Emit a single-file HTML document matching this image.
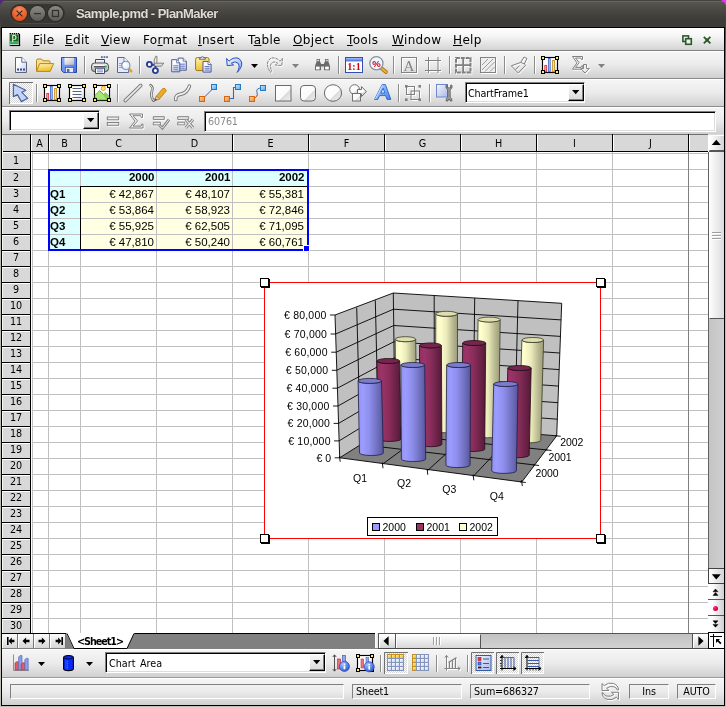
<!DOCTYPE html><html><head><meta charset="utf-8"><title>Sample.pmd - PlanMaker</title><style>
html,body{margin:0;padding:0}
body{width:726px;height:707px;overflow:hidden;position:relative;background:#3c3b37;font-family:"DejaVu Sans","Liberation Sans",sans-serif;font-size:12px;color:#000}
.a{position:absolute}
.bar{position:absolute;left:2px;width:722px}
.hd{position:absolute;background:#d8d8d8;font-family:"DejaVu Sans Condensed","DejaVu Sans",sans-serif;text-align:center;line-height:16px}
.ui{font-family:"DejaVu Sans Condensed","DejaVu Sans",sans-serif;font-size:10.7px;letter-spacing:-0.15px;white-space:nowrap}
.cell{position:absolute;font-family:"Liberation Sans",sans-serif;font-size:11.5px;line-height:16px;white-space:nowrap}
.sep{position:absolute;width:1px;background:#8a8a8a;box-shadow:1px 0 0 #fff}
.sunk{position:absolute;background:#fff;border:1px solid;border-color:#6e6e6e #fff #fff #6e6e6e;box-sizing:border-box}
svg{position:absolute;overflow:visible}
</style></head><body><div id="root" style="position:absolute;left:0;top:0;width:726px;height:707px;overflow:hidden;will-change:transform">
<div class="a" style="left:0;top:0;width:726px;height:28px;background:linear-gradient(#454440 0,#454440 1px,#66655f 1px,#66655f 2px,#57564f 2px,#4b4a45 9px,#3e3d39 18px,#3c3b37 27px);"></div>
<svg style="left:0;top:0" width="726" height="6" viewBox="0 0 726 6"><path d="M0 0H5.2Q1.6 1.4 0 5.2z" fill="#50287e"/><path d="M726 0H720.8Q724.4 1.4 726 5.2z" fill="#ee30f8"/></svg>
<div class="a" style="left:0;top:20px;width:726px;height:687px;background:linear-gradient(#3e3d39 0,#4a4843 8px,#807d77 45px,#a8a59e 90px,#c0bdb6 150px,#c2bfb8 100%)"></div>
<div class="a" style="left:1px;top:20px;width:724px;height:7px;background:#3c3b37"></div>
<div class="a" style="left:1px;top:27px;width:724px;height:679px;background:#000"></div>
<div class="a" style="left:10px;top:4px;width:55px;height:19px;border-radius:10px;background:#373632;box-shadow:0 1px 0 #4a4944"></div>
<div class="a" style="left:12px;top:6px;width:15px;height:15px;border-radius:8px;background:radial-gradient(circle at 50% 25%,#f68c5e,#e65a26 65%,#c8461a);box-shadow:0 0 0 1px #3a2a22"></div>
<div class="a" style="left:30px;top:6px;width:15px;height:15px;border-radius:8px;background:linear-gradient(#8b8a84,#5c5b55);box-shadow:0 0 0 1px #2c2b28"></div>
<div class="a" style="left:48px;top:6px;width:15px;height:15px;border-radius:8px;background:linear-gradient(#8b8a84,#5c5b55);box-shadow:0 0 0 1px #2c2b28"></div>
<svg style="left:12px;top:6px" width="51" height="15"><path d="M4.6 4.6l5.8 5.8M10.4 4.6l-5.8 5.8" stroke="#3c2014" stroke-width="1.1" fill="none"/><path d="M22 7.6h7" stroke="#33322e" stroke-width="1.3"/><rect x="40.5" y="4.5" width="6" height="6" fill="none" stroke="#33322e" stroke-width="1.3"/></svg>
<div class="a" style="left:76px;top:5px;font:bold 13px/17px 'Liberation Sans',sans-serif;color:#dfdbd2;white-space:nowrap;letter-spacing:-0.55px;text-shadow:0 -1px 0 rgba(20,20,30,0.55)" id="title">Sample.pmd - PlanMaker</div>
<div class="bar" style="top:28px;height:22px;background:linear-gradient(#fff,#f4f4f4 40%,#d4d4d4)"></div>
<div class="bar" style="top:50px;height:1px;background:#7f7f7f"></div>
<div class="a mi" style="left:33px;top:33px;font-size:12px;line-height:15px;white-space:nowrap;letter-spacing:0.35px"><u>F</u>ile</div>
<div class="a mi" style="left:65px;top:33px;font-size:12px;line-height:15px;white-space:nowrap;letter-spacing:0.35px"><u>E</u>dit</div>
<div class="a mi" style="left:101px;top:33px;font-size:12px;line-height:15px;white-space:nowrap;letter-spacing:0.35px"><u>V</u>iew</div>
<div class="a mi" style="left:143px;top:33px;font-size:12px;line-height:15px;white-space:nowrap;letter-spacing:0.35px">Fo<u>r</u>mat</div>
<div class="a mi" style="left:198px;top:33px;font-size:12px;line-height:15px;white-space:nowrap;letter-spacing:0.35px"><u>I</u>nsert</div>
<div class="a mi" style="left:248px;top:33px;font-size:12px;line-height:15px;white-space:nowrap;letter-spacing:0.35px">T<u>a</u>ble</div>
<div class="a mi" style="left:293px;top:33px;font-size:12px;line-height:15px;white-space:nowrap;letter-spacing:0.35px"><u>O</u>bject</div>
<div class="a mi" style="left:347px;top:33px;font-size:12px;line-height:15px;white-space:nowrap;letter-spacing:0.35px"><u>T</u>ools</div>
<div class="a mi" style="left:392px;top:33px;font-size:12px;line-height:15px;white-space:nowrap;letter-spacing:0.35px"><u>W</u>indow</div>
<div class="a mi" style="left:453px;top:33px;font-size:12px;line-height:15px;white-space:nowrap;letter-spacing:0.35px"><u>H</u>elp</div>
<svg style="left:0;top:0" width="40" height="52" viewBox="0 0 40 52"><rect x="9.4" y="33.4" width="9.8" height="12" fill="#f4f4f4" stroke="#8a8a8a" stroke-width="0.7"/><rect x="10" y="34.4" width="8.6" height="7.3" fill="#1f6b22"/><rect x="10" y="41.4" width="8.6" height="0.7" fill="#7a8a7a"/><rect x="10" y="42.1" width="8.6" height="2.2" fill="#2aa85e"/><rect x="18.9" y="34" width="1.2" height="12" fill="#000"/><rect x="10.2" y="45" width="9.9" height="1.1" fill="#000"/><path d="M10 33.6H19" stroke="#000" stroke-width="1.3" stroke-dasharray="1 1"/><text x="11.6" y="42.3" font-family="DejaVu Sans,sans-serif" font-size="8.6" fill="#fff">P</text></svg>
<svg style="left:682px;top:35px" width="30" height="11"><rect x="0.9" y="0.9" width="5.6" height="5.6" fill="none" stroke="#2a5a2a" stroke-width="1.6"/><rect x="3.7" y="3.7" width="5.6" height="5.6" fill="#eee" stroke="#2a5a2a" stroke-width="1.6"/><path d="M21.8 1.8l6.6 6.6M28.4 1.8l-6.6 6.6" stroke="#2a5a2a" stroke-width="1.8"/><rect x="23.6" y="3.6" width="3" height="3" fill="#2a5a2a"/></svg>
<div class="bar" style="top:51px;height:27px;background:linear-gradient(#fff 0,#fff 1px,#f5f5f5 1px,#ebebeb 50%,#d0d0d0)"></div>
<div class="bar" style="top:78px;height:1px;background:#8c8c8c"></div>
<div class="bar" style="top:79px;height:27px;background:linear-gradient(#fff 0,#fff 1px,#f5f5f5 1px,#ebebeb 50%,#d0d0d0)"></div>
<div class="bar" style="top:106px;height:1px;background:#8c8c8c"></div>
<div class="bar" style="top:107px;height:27px;background:linear-gradient(#fff 0,#fff 1px,#f5f5f5 1px,#ebebeb 50%,#d0d0d0)"></div>
<svg style="left:0;top:0" width="726" height="707" viewBox="0 0 726 707"><defs>
<linearGradient id="fr" x1="0" y1="0" x2="1" y2="1"><stop offset="0" stop-color="#fff"/><stop offset="0.5" stop-color="#fff"/><stop offset="1" stop-color="#d0d8f4"/></linearGradient>
<linearGradient id="pg" x1="0" y1="0" x2="1" y2="1"><stop offset="0" stop-color="#fff"/><stop offset="0.35" stop-color="#fcfcff"/><stop offset="1" stop-color="#c0ccf0"/></linearGradient>
<linearGradient id="fo" x1="0" y1="0" x2="0.3" y2="1"><stop offset="0" stop-color="#fff4c0"/><stop offset="0.6" stop-color="#f8d460"/><stop offset="1" stop-color="#f0c030"/></linearGradient>
<linearGradient id="fl" x1="0" y1="0" x2="1" y2="1"><stop offset="0" stop-color="#90b0ff"/><stop offset="1" stop-color="#4470e0"/></linearGradient>
<linearGradient id="gr" x1="0" y1="0" x2="1" y2="1"><stop offset="0" stop-color="#fff"/><stop offset="1" stop-color="#b8b8b8"/></linearGradient>
<linearGradient id="gr2" x1="0" y1="0" x2="0" y2="1"><stop offset="0" stop-color="#f4f4f4"/><stop offset="1" stop-color="#a8a8a8"/></linearGradient>
<linearGradient id="ub" x1="0" y1="0" x2="1" y2="1"><stop offset="0" stop-color="#f4f8ff"/><stop offset="1" stop-color="#88aaf0"/></linearGradient>
<linearGradient id="tb" x1="0" y1="0" x2="0" y2="1"><stop offset="0" stop-color="#a8c0ff"/><stop offset="1" stop-color="#4068d8"/></linearGradient>
<linearGradient id="sh" x1="0" y1="0" x2="1" y2="1"><stop offset="0" stop-color="#fff"/><stop offset="0.6" stop-color="#fafafa"/><stop offset="0.61" stop-color="#dcdcdc"/><stop offset="1" stop-color="#f0f0f0"/></linearGradient>
<linearGradient id="ta" x1="0" y1="0" x2="1" y2="1"><stop offset="0" stop-color="#b8dcff"/><stop offset="1" stop-color="#4080e8"/></linearGradient>
<linearGradient id="osq" x1="0" y1="0" x2="1" y2="1"><stop offset="0" stop-color="#ffd8a0"/><stop offset="1" stop-color="#f08030"/></linearGradient>
<linearGradient id="bsq" x1="0" y1="0" x2="1" y2="1"><stop offset="0" stop-color="#c8ecff"/><stop offset="1" stop-color="#50a8e8"/></linearGradient>
<linearGradient id="pr" x1="0" y1="0" x2="1" y2="1"><stop offset="0" stop-color="#f4f8ff"/><stop offset="1" stop-color="#a8b8e8"/></linearGradient>
<linearGradient id="yh" x1="0" y1="0" x2="1" y2="1"><stop offset="0" stop-color="#fff0a0"/><stop offset="1" stop-color="#f0b020"/></linearGradient>
<linearGradient id="cc" x1="0" y1="0" x2="1" y2="1"><stop offset="0" stop-color="#fff"/><stop offset="1" stop-color="#c4d0f0"/></linearGradient>
<radialGradient id="ib" cx="0.35" cy="0.3" r="0.8"><stop offset="0" stop-color="#a0c0ff"/><stop offset="1" stop-color="#2050d0"/></radialGradient>
<pattern id="chk" width="2" height="2" patternUnits="userSpaceOnUse"><rect width="2" height="2" fill="#fff"/><rect width="1" height="1" fill="#d4d4d4"/><rect x="1" y="1" width="1" height="1" fill="#d4d4d4"/></pattern>
</defs><g transform="translate(15,57)"><path d="M0.5 0.5H6.8L11.5 5.2V15.5H0.5z" fill="url(#pg)" stroke="#5a6680" stroke-width="1"/><path d="M6.8 0.5V5.2H11.5" fill="#fff" stroke="#5a6680" stroke-width="1"/><rect x="2" y="11.5" width="2" height="2" fill="#404a80"/><rect x="5" y="11.5" width="2" height="2" fill="#404a80"/><rect x="8" y="11.5" width="2" height="2" fill="#404a80"/></g><g transform="translate(36,58)"><path d="M0.5 13V2.5Q0.5 1 2 1H5.5L7 2.8H13Q14 2.8 14 4V5.5" fill="#f8e090" stroke="#b08820" stroke-width="1"/><path d="M0.6 13.4L3.6 5.6H17.6L14.2 13.4z" fill="url(#fo)" stroke="#b08820" stroke-width="1"/></g><g transform="translate(61,57)"><path d="M0.5 0.5H15.5V15.5H2.5L0.5 13.5z" fill="url(#fl)" stroke="#2848a8" stroke-width="1"/><rect x="3.5" y="0.8" width="9.5" height="7" fill="url(#gr)"/><rect x="4.5" y="10.5" width="8" height="5" fill="#e8e8e8" stroke="#2848a8" stroke-width="0.6"/><rect x="6" y="12" width="2.4" height="3" fill="#5a6a98"/></g><rect x="84" y="56" width="1" height="18" fill="#8c8c8c"/><rect x="85" y="56" width="1" height="18" fill="#fff"/><g transform="translate(91,56)"><rect x="10" y="0.3" width="1.7" height="1.5" fill="#404a80"/><rect x="12.6" y="0.3" width="1.7" height="1.5" fill="#404a80"/><rect x="15.2" y="0.3" width="1.7" height="1.5" fill="#404a80"/><path d="M4.5 8V3.5H13.5V8" fill="#fff" stroke="#38487a" stroke-width="1"/><rect x="5.5" y="4.6" width="7" height="2.8" fill="#dde4fa"/><rect x="0.5" y="7" width="17" height="8.6" rx="3.2" fill="url(#gr2)" stroke="#484848" stroke-width="1"/><path d="M3 10.7H15" stroke="#505050" stroke-width="1.3"/><path d="M3 9.5H13" stroke="#fff" stroke-width="0.8"/><circle cx="15.1" cy="10.4" r="1" fill="#30d040"/><path d="M4.5 12.2V17.5H13.5V12.2z" fill="#fff" stroke="#38487a" stroke-width="1"/><path d="M6 14H12M6 15.8H12" stroke="#6878b8" stroke-width="0.9"/></g><g transform="translate(117,57)"><path d="M0.5 0.5H7L11.6 5V15.5H0.5z" fill="#e6eafa" stroke="#5a6890" stroke-width="1"/><path d="M7 0.5V5H11.6" fill="#fff" stroke="#5a6890" stroke-width="0.8"/><path d="M2 6.5h3M2 8.5h2.5M2 10.5h3" stroke="#8090b8" stroke-width="0.8"/><path d="M11.8 11.6L14.2 14.2" stroke="#e8a020" stroke-width="2.6" stroke-linecap="round"/><circle cx="8.8" cy="8.4" r="4.1" fill="#e4f2ff" stroke="#8090a8" stroke-width="1.1"/><circle cx="8" cy="7.6" r="2" fill="#fff"/></g><rect x="139" y="56" width="1" height="18" fill="#8c8c8c"/><rect x="140" y="56" width="1" height="18" fill="#fff"/><g transform="translate(146,56)"><path d="M9.7 0.3H10.9V9.6H8.2V4z" fill="#ececec" stroke="#5a5a5a" stroke-width="0.7"/><path d="M8 7.2H17.8L15.4 10.2H8z" fill="#dcdcdc" stroke="#5a5a5a" stroke-width="0.7"/><path d="M5.4 8.8L8.6 9M9.4 12.2L9.6 10" stroke="#283c98" stroke-width="1.6"/><circle cx="3.4" cy="8.4" r="2.5" fill="#fff" stroke="#283c98" stroke-width="1.9"/><circle cx="9.4" cy="14.6" r="2.5" fill="#fff" stroke="#283c98" stroke-width="1.9"/></g><g transform="translate(171,57)"><g transform="translate(6.7,0.6)"><path d="M0.5 0.5H5.5L8.6 3.6V12.6H0.5z" fill="url(#pg)" stroke="#4a5a90" stroke-width="1"/><path d="M5.5 0.5V3.6H8.6" fill="#fff" stroke="#4a5a90" stroke-width="0.8"/><path d="M2 6.6h5M2 8.6h5M2 10.6h5" stroke="#5868b8" stroke-width="0.9"/></g><g transform="translate(0.2,2.2)"><path d="M0.5 0.5H5.5L8.6 3.6V12.6H0.5z" fill="url(#pg)" stroke="#4a5a90" stroke-width="1"/><path d="M5.5 0.5V3.6H8.6" fill="#fff" stroke="#4a5a90" stroke-width="0.8"/><path d="M2 6.6h5M2 8.6h5M2 10.6h5" stroke="#5868b8" stroke-width="0.9"/></g></g><g transform="translate(195,56)"><rect x="0.6" y="1.6" width="13.4" height="13" rx="1.6" fill="url(#fo)" stroke="#a07818" stroke-width="1"/><path d="M4.4 3.4V2H6Q6.2 0.4 7.4 0.4T8.8 2H10.4V3.4z" fill="#d8d8d8" stroke="#606060" stroke-width="0.7"/><g transform="translate(7.5,4.9)"><path d="M0.5 0.5H5.5L8.6 3.6V11.2H0.5z" fill="url(#pg)" stroke="#4a5a90" stroke-width="1"/><path d="M5.5 0.5V3.6H8.6" fill="#fff" stroke="#4a5a90" stroke-width="0.8"/><path d="M2 5.6h5M2 7.4h5M2 9.2h5" stroke="#5868b8" stroke-width="0.9"/></g></g><g transform="translate(226,57)"><path d="M0.6 1.5L1.2 8.6L7.6 8L5.4 6.2Q9.5 3.4 12.2 6.4Q14.4 9.6 11.2 15.4Q17 9.6 15.4 4.6Q13 -0.6 7 1.4Q4.6 2.4 3 4.2z" fill="url(#ub)" stroke="#2850b8" stroke-width="1" stroke-linejoin="round"/></g><path d="M251 64h7l-3.5 4z" fill="#000"/><g transform="translate(268,58)"><path d="M15.4 1.5L14.8 8.6L8.4 8L10.6 6.2Q7 3.6 4.2 6.6Q2.6 9.4 4.6 13.4L3.6 15.4Q-0.6 9.8 0.8 5Q3 -0.6 9 1.4Q11.4 2.4 13 4.2z" fill="none" stroke-width="1" stroke-linejoin="round" stroke-dasharray="3 0.8" stroke="#fff"/></g><g transform="translate(267,57)"><path d="M15.4 1.5L14.8 8.6L8.4 8L10.6 6.2Q7 3.6 4.2 6.6Q2.6 9.4 4.6 13.4L3.6 15.4Q-0.6 9.8 0.8 5Q3 -0.6 9 1.4Q11.4 2.4 13 4.2z" fill="none" stroke-width="1" stroke-linejoin="round" stroke-dasharray="3 0.8" stroke="#828282"/></g><path d="M292 64h7l-3.5 4z" fill="#828282"/><g transform="translate(314,58)"><path d="M1 12.3V8L2.6 3.6V1H6V3.6L7.2 6H9.8L11 3.6V1H14.4V3.6L16 8V12.3H10V8.5H7V12.3z" fill="#6a6a6a"/><rect x="2" y="8.6" width="3.6" height="2.8" fill="#fff"/><rect x="11.2" y="8.6" width="3.6" height="2.8" fill="#fff"/><rect x="3.2" y="1.8" width="2" height="1.4" fill="#ddd"/><rect x="11.8" y="1.8" width="2" height="1.4" fill="#ddd"/></g><rect x="338" y="56" width="1" height="18" fill="#8c8c8c"/><rect x="339" y="56" width="1" height="18" fill="#fff"/><g transform="translate(345,57)"><rect x="0.5" y="0.5" width="17" height="15" fill="#fff" stroke="#3050b0" stroke-width="1"/><rect x="1" y="1" width="16" height="3.4" fill="url(#tb)"/><text x="9" y="13.2" text-anchor="middle" font-family="Liberation Serif,serif" font-weight="bold" font-size="10.5" fill="#d00010" textLength="13.5" lengthAdjust="spacingAndGlyphs">1:1</text></g><g transform="translate(369,56)"><path d="M11.5 11.5L17 16" stroke="#a87010" stroke-width="3.6" stroke-linecap="round"/><path d="M11.5 11.5L17 16" stroke="#f0b030" stroke-width="2.2" stroke-linecap="round"/><circle cx="7.4" cy="7.3" r="6.6" fill="#eef6ff" stroke="#8890a0" stroke-width="1.3"/><text x="7.4" y="11" text-anchor="middle" font-family="Liberation Sans,sans-serif" font-weight="bold" font-size="9.5" fill="#d00010">%</text></g><rect x="393" y="56" width="1" height="18" fill="#8c8c8c"/><rect x="394" y="56" width="1" height="18" fill="#fff"/><g transform="translate(402,58)"><rect x="0.5" y="0.5" width="15" height="15" fill="none" stroke-width="1" stroke="#fff"/></g><g transform="translate(401,57)"><rect x="0.5" y="0.5" width="15" height="15" fill="none" stroke-width="1" stroke="#828282"/><text x="8" y="13.6" text-anchor="middle" font-family="Liberation Serif,serif" font-size="15" fill="#828282">A</text></g><g transform="translate(426,58)"><path d="M0 3.5H16M0 13.5H16M3.5 0V16M13 0V16" fill="none" stroke-width="1" stroke="#fff"/></g><g transform="translate(425,57)"><path d="M0 3.5H16M0 13.5H16M3.5 0V16M13 0V16" fill="none" stroke-width="1" stroke="#828282"/></g><rect x="449" y="56" width="1" height="18" fill="#8c8c8c"/><rect x="450" y="56" width="1" height="18" fill="#fff"/><g transform="translate(456,58)"><rect x="1" y="1" width="14.5" height="14.5" fill="none" stroke-width="2" stroke-dasharray="3.9 0.93" stroke="#fff"/><path d="M8.2 1.5V15M1.5 8.2H15" fill="none" stroke-width="1.8" stroke="#fff"/></g><g transform="translate(455,57)"><rect x="1" y="1" width="14.5" height="14.5" fill="none" stroke-width="2" stroke-dasharray="3.9 0.93" stroke="#808080"/><path d="M8.2 1.5V15M1.5 8.2H15" fill="none" stroke-width="1.8" stroke="#808080"/></g><g transform="translate(480,57)"><rect x="1.5" y="1.5" width="15" height="15" fill="none" stroke="#fff"/><rect x="0.5" y="0.5" width="15" height="15" fill="#eee" stroke="#828282"/><path d="M2 8L8 2M2 13L13 2M5 14.5L14.5 5M10 14.5L14.5 10" stroke="#9a9a9a" stroke-width="1"/></g><rect x="504" y="56" width="1" height="18" fill="#8c8c8c"/><rect x="505" y="56" width="1" height="18" fill="#fff"/><g transform="translate(511.5,57)"><path d="M13.5 1L16.5 2.5L13.8 8L15.2 9.2L7.8 17L0.8 9.8L10.2 6.4z M10.2 6.4L13.8 8 M5 13.5L9 9.8" fill="none" stroke-width="1" stroke-linejoin="round" stroke="#fff"/></g><g transform="translate(510.5,56)"><path d="M13.5 1L16.5 2.5L13.8 8L15.2 9.2L7.8 17L0.8 9.8L10.2 6.4z M10.2 6.4L13.8 8 M5 13.5L9 9.8" fill="none" stroke-width="1" stroke-linejoin="round" stroke="#828282"/></g><rect x="534" y="56" width="1" height="18" fill="#8c8c8c"/><rect x="535" y="56" width="1" height="18" fill="#fff"/><g transform="translate(541,56)"><rect x="1.5" y="1.5" width="15" height="15" fill="url(#fr)" stroke="#000" stroke-width="1.15"/><rect x="3.8" y="9.4" width="1.8" height="6.3" fill="#ffb0b8" stroke="#d83848" stroke-width="0.9"/><rect x="7.4" y="2.5" width="1.8" height="13.2" fill="#b8c8f8" stroke="#4868c0" stroke-width="0.9"/><rect x="11.6" y="4.5" width="1.8" height="11.2" fill="#ffe8a0" stroke="#c09028" stroke-width="0.9"/><rect x="0.5" y="0.5" width="3" height="3" fill="#ffe860" stroke="#000" stroke-width="1"/><rect x="14.5" y="0.5" width="3" height="3" fill="#ffe860" stroke="#000" stroke-width="1"/><rect x="0.5" y="14.5" width="3" height="3" fill="#ffe860" stroke="#000" stroke-width="1"/><rect x="14.5" y="14.5" width="3" height="3" fill="#ffe860" stroke="#000" stroke-width="1"/></g><g transform="translate(573,57)"><path d="M0.5 0.5H10.5V3.5H9.5L8.8 2H3.5L7.2 6.6L3.5 11.4H9L9.8 9.8H10.8V13.2H0.5L5 6.8z" fill="none" stroke-width="1" stroke="#fff"/></g><g transform="translate(572,56)"><path d="M0.5 0.5H10.5V3.5H9.5L8.8 2H3.5L7.2 6.6L3.5 11.4H9L9.8 9.8H10.8V13.2H0.5L5 6.8z" fill="none" stroke-width="1" stroke="#828282"/></g><g transform="translate(573,57)"><path d="M11.5 8.5H14.5V12.5H17.2L13 17L8.8 12.5H11.5z" fill="#eee" stroke-width="1" stroke="#fff"/></g><g transform="translate(572,56)"><path d="M11.5 8.5H14.5V12.5H17.2L13 17L8.8 12.5H11.5z" fill="#eee" stroke-width="1" stroke="#828282"/></g><path d="M598 64h7l-3.5 4z" fill="#828282"/></svg>
<svg style="left:0;top:0" width="726" height="707" viewBox="0 0 726 707"><rect x="9" y="82" width="24" height="22" fill="url(#chk)"/><path d="M9.5 104V82.5H33" stroke="#707070" fill="none"/><path d="M10 103.5H32.5V83" stroke="#fff" fill="none"/><g transform="translate(13,84)"><path d="M0.4 0.3L0.4 12.6L4.4 10.6L8.4 17.6L14.6 14.2L8.8 8.4L12.8 6.2z" fill="#c4d4f8" stroke="#4a60a4" stroke-width="1.2" stroke-linejoin="round"/></g><rect x="36" y="84" width="1" height="18" fill="#8c8c8c"/><rect x="37" y="84" width="1" height="18" fill="#fff"/><g transform="translate(43,84)"><rect x="1.5" y="1.5" width="15" height="15" fill="url(#fr)" stroke="#000" stroke-width="1.15"/><rect x="3.8" y="9.4" width="1.8" height="6.3" fill="#ffb0b8" stroke="#d83848" stroke-width="0.9"/><rect x="7.4" y="2.5" width="1.8" height="13.2" fill="#b8c8f8" stroke="#4868c0" stroke-width="0.9"/><rect x="11.6" y="4.5" width="1.8" height="11.2" fill="#ffe8a0" stroke="#c09028" stroke-width="0.9"/><rect x="0.5" y="0.5" width="3" height="3" fill="#ffe860" stroke="#000" stroke-width="1"/><rect x="14.5" y="0.5" width="3" height="3" fill="#ffe860" stroke="#000" stroke-width="1"/><rect x="0.5" y="14.5" width="3" height="3" fill="#ffe860" stroke="#000" stroke-width="1"/><rect x="14.5" y="14.5" width="3" height="3" fill="#ffe860" stroke="#000" stroke-width="1"/></g><g transform="translate(68,84)"><rect x="1.5" y="1.5" width="15" height="15" fill="url(#fr)" stroke="#000" stroke-width="1.15"/><rect x="4.5" y="4" width="9" height="1" fill="#5a6478"/><rect x="4.5" y="7" width="9" height="1" fill="#5a6478"/><rect x="4.5" y="10" width="9" height="1" fill="#5a6478"/><rect x="4.5" y="13" width="9" height="1" fill="#5a6478"/><rect x="0.5" y="0.5" width="3" height="3" fill="#ffe860" stroke="#000" stroke-width="1"/><rect x="14.5" y="0.5" width="3" height="3" fill="#ffe860" stroke="#000" stroke-width="1"/><rect x="0.5" y="14.5" width="3" height="3" fill="#ffe860" stroke="#000" stroke-width="1"/><rect x="14.5" y="14.5" width="3" height="3" fill="#ffe860" stroke="#000" stroke-width="1"/></g><g transform="translate(93,84)"><rect x="1.5" y="1.5" width="15" height="15" fill="url(#fr)" stroke="#000" stroke-width="1.15"/><rect x="2.5" y="2.5" width="13" height="13" fill="#fff"/><path d="M2.2 15.8V11L6.6 6.6L10.6 10.4L12.4 8.6L15.8 12V15.8z" fill="#a8e478" stroke="#60a830" stroke-width="0.7"/><path d="M6.6 6.6L10.6 10.4L14.5 15.8" fill="none" stroke="#60a830" stroke-width="0.8"/><path d="M10.6 10.4L12.4 8.6L15.8 12V15.8H14.5z" fill="#8cd058"/><circle cx="10.3" cy="4.4" r="2.1" fill="#ffe070" stroke="#d09818" stroke-width="0.8"/><rect x="0.5" y="0.5" width="3" height="3" fill="#ffe860" stroke="#000" stroke-width="1"/><rect x="14.5" y="0.5" width="3" height="3" fill="#ffe860" stroke="#000" stroke-width="1"/><rect x="0.5" y="14.5" width="3" height="3" fill="#ffe860" stroke="#000" stroke-width="1"/><rect x="14.5" y="14.5" width="3" height="3" fill="#ffe860" stroke="#000" stroke-width="1"/></g><rect x="117" y="84" width="1" height="18" fill="#8c8c8c"/><rect x="118" y="84" width="1" height="18" fill="#fff"/><path d="M125.2 100.6L140.8 85.4" stroke="#808080" stroke-width="3.6" stroke-linecap="round"/><path d="M125.2 100.6L140.8 85.4" stroke="#ececec" stroke-width="1.5" stroke-linecap="round"/><g transform="translate(148,84)"><path d="M2.5 1Q5.5 3 4 7T4.2 14.5T6 15.8" fill="none" stroke="#707070" stroke-width="2.6" stroke-linecap="round"/><path d="M2.5 1Q5.5 3 4 7T4.2 14.5T6 15.8" fill="none" stroke="#f0f0f0" stroke-width="1" stroke-linecap="round"/><path d="M7 16.6L8.4 12.2L14.8 4.4Q17.4 3.6 18.4 6.8L11.6 14.8z" fill="#f0a820" stroke="#b87810" stroke-width="0.8"/><path d="M7 16.6L8.4 12.2L11.6 14.8z" fill="#f4d8b0" stroke="#806040" stroke-width="0.6"/><path d="M7 16.6L7.7 14.6L8.9 15.6z" fill="#303030"/></g><g transform="translate(174,84.5)"><path d="M1.8 15Q1 10.5 7 9.6T15.4 1.6" fill="none" stroke="#7a7a7a" stroke-width="3.6" stroke-linecap="round"/><path d="M1.8 15Q1 10.5 7 9.6T15.4 1.6" fill="none" stroke="#f2f2f2" stroke-width="1.7" stroke-linecap="round"/></g><path d="M203 98.5L213.5 88" stroke="#3868b0" stroke-width="1" fill="none"/><rect x="199.5" y="96.5" width="5" height="5" fill="url(#osq)" stroke="#d06818" stroke-width="1"/><rect x="211.5" y="84.5" width="5" height="5" fill="url(#bsq)" stroke="#2878c0" stroke-width="1"/><path d="M228 98.5H233.5V87.5H238" stroke="#3868b0" stroke-width="1.1" fill="none"/><rect x="224.5" y="96.5" width="5" height="5" fill="url(#osq)" stroke="#d06818" stroke-width="1"/><rect x="235.5" y="84.5" width="5" height="5" fill="url(#bsq)" stroke="#2878c0" stroke-width="1"/><path d="M253 98.5Q258.5 97 257 92.5T262 88" stroke="#3868b0" stroke-width="1" fill="none"/><path d="M253 98.5Q256 98 257.3 95.5" stroke="#d06818" stroke-width="1" fill="none"/><rect x="249.5" y="96.5" width="5" height="5" fill="url(#osq)" stroke="#d06818" stroke-width="1"/><rect x="260.5" y="85.5" width="5" height="5" fill="url(#bsq)" stroke="#2878c0" stroke-width="1"/><rect x="275.5" y="85.5" width="15.5" height="15.5" fill="url(#sh)" stroke="#6a6a6a" stroke-width="1"/><rect x="300.5" y="85.5" width="15" height="15.5" rx="3.5" fill="url(#sh)" stroke="#6a6a6a" stroke-width="1"/><ellipse cx="333" cy="93" rx="8.6" ry="8.3" fill="url(#sh)" stroke="#6a6a6a" stroke-width="1"/><g transform="translate(349,84)"><circle cx="5.6" cy="5.6" r="4.9" fill="url(#sh)" stroke="#707070" stroke-width="1"/><path d="M8.5 5.5H12.5V2.6L17.4 7.6L12.5 12.6V9.8H8.5z" fill="url(#sh)" stroke="#707070" stroke-width="1"/><rect x="3.5" y="9.5" width="8" height="7.5" fill="url(#sh)" stroke="#707070" stroke-width="1"/></g><g transform="translate(374,84)"><path d="M8.2 0.6H11.4L16.8 15.4H13L11.6 11.6H5.6L3.8 15.4H0.6zM6.8 9H10.8L9.2 4.2z" fill="url(#ta)" stroke="#2860d0" stroke-width="0.9" stroke-linejoin="round" fill-rule="evenodd"/><path d="M8.6 1.2L1.4 15" stroke="#d8ecff" stroke-width="0.9"/></g><rect x="398" y="84" width="1" height="18" fill="#8c8c8c"/><rect x="399" y="84" width="1" height="18" fill="#fff"/><g transform="translate(406,86)"><g stroke="#fff" fill="none"><rect x="1.5" y="1.5" width="8" height="8" fill="none" stroke-width="1"/><rect x="6" y="6" width="8.5" height="8.5" fill="none" stroke-width="1"/></g></g><g transform="translate(405,85)"><g stroke="#808080" fill="none"><rect x="1.5" y="1.5" width="8" height="8" fill="none" stroke-width="1"/><rect x="6" y="6" width="8.5" height="8.5" fill="none" stroke-width="1"/></g><g fill="#808080"><rect x="0" y="0" width="2.6" height="2.6"/><rect x="13.4" y="0" width="2.6" height="2.6"/><rect x="0" y="13.4" width="2.6" height="2.6"/><rect x="13.4" y="13.4" width="2.6" height="2.6"/></g></g><rect x="429" y="84" width="1" height="18" fill="#8c8c8c"/><rect x="430" y="84" width="1" height="18" fill="#fff"/><g transform="translate(436,84)"><rect x="0.5" y="0.5" width="11" height="12.5" fill="url(#pr)" stroke="#7088c8" stroke-width="1"/><path d="M10 1.2Q9.2 4.6 11.8 5.6V13.4L10.2 14.8V17H12V15.4H14V17H15.8V14.8L14.2 13.4V5.6Q16.8 4.6 16 1.2H14.6V3.8H11.4V1.2z" fill="#a0a0a0" stroke="#585858" stroke-width="0.8"/></g></svg>
<div class="a" style="left:465px;top:82px;width:120px;height:21px;background:#fff;box-sizing:border-box;border:1px solid;border-color:#808080 #fff #fff #808080;box-shadow:inset 1px 1px 0 #000,inset -1px -1px 0 #dcdcdc"></div>
<div class="a ui" style="left:468px;top:86px;line-height:15px">ChartFrame1</div>
<div class="a" style="left:568px;top:84px;width:16px;height:17px;background:linear-gradient(#f8f8f8,#d8d8d8);border:1px solid;border-color:#fff #000 #000 #fff;box-sizing:border-box;box-shadow:inset -1px -1px 0 #808080"></div>
<svg style="left:572px;top:90px" width="8" height="5"><path d="M0 0h7.4l-3.7 4.2z" fill="#000"/></svg>
<div class="a" style="left:9px;top:110px;width:91px;height:21px;background:#fff;box-sizing:border-box;border:1px solid;border-color:#808080 #fff #fff #808080;box-shadow:inset 1px 1px 0 #000,inset -1px -1px 0 #dcdcdc"></div>
<div class="a" style="left:83px;top:112px;width:16px;height:17px;background:linear-gradient(#f8f8f8,#d8d8d8);border:1px solid;border-color:#fff #000 #000 #fff;box-sizing:border-box;box-shadow:inset -1px -1px 0 #808080"></div>
<svg style="left:87px;top:118px" width="8" height="5"><path d="M0 0h7.4l-3.7 4.2z" fill="#000"/></svg>
<div class="a" style="left:204px;top:111px;width:512px;height:21px;background:#fff;box-sizing:border-box;border:1px solid;border-color:#808080 #fff #fff #808080;box-shadow:inset 1px 1px 0 #000,inset -1px -1px 0 #dcdcdc"></div>
<div class="a ui" style="left:208px;top:115px;line-height:14px;color:#8a8a8a">60761</div>
<svg style="left:0;top:0" width="726" height="707" viewBox="0 0 726 707"><g transform="translate(107.6,117.3)"><g stroke="#fff"><rect x="0.5" y="0.5" width="11.4" height="2.8" fill="#ececec" stroke-width="1"/><rect x="0.5" y="6" width="11.4" height="2.8" fill="#ececec" stroke-width="1"/></g></g><g transform="translate(106.8,116.5)"><g stroke="#828282"><rect x="0.5" y="0.5" width="11.4" height="2.8" fill="#ececec" stroke-width="1"/><rect x="0.5" y="6" width="11.4" height="2.8" fill="#ececec" stroke-width="1"/></g></g><g transform="translate(130,114.5)"><path d="M0.5 0.5H13.5V4H12.4L11.6 2.2H4L8.6 7.4L4 12.6H12L12.8 10.6H14V14.5H0.5L6 7.6z" fill="none" stroke-width="1" stroke="#fff"/></g><g transform="translate(129,113.5)"><path d="M0.5 0.5H13.5V4H12.4L11.6 2.2H4L8.6 7.4L4 12.6H12L12.8 10.6H14V14.5H0.5L6 7.6z" fill="none" stroke-width="1" stroke="#828282"/></g><g transform="translate(153.6,117)"><g stroke="#fff"><path d="M0.5 0.5H11.5V3.2H0.5zM0.5 6H7.6V8.7H0.5z" fill="#ececec" stroke-width="1"/></g></g><g transform="translate(152.8,116.2)"><g stroke="#828282"><path d="M0.5 0.5H11.5V3.2H0.5zM0.5 6H7.6V8.7H0.5z" fill="#ececec" stroke-width="1"/></g><path d="M6.4 8.6L9.6 12L16.2 3.4" fill="none" stroke="#828282" stroke-width="2.8" stroke-linejoin="miter"/><path d="M6.4 8.6L9.6 12L16.2 3.4" fill="none" stroke="#ececec" stroke-width="1"/></g><g transform="translate(178,117)"><g stroke="#fff"><path d="M0.5 0.5H11.5V3.2H0.5zM0.5 6H7.6V8.7H0.5z" fill="#ececec" stroke-width="1"/></g></g><g transform="translate(177.2,116.2)"><g stroke="#828282"><path d="M0.5 0.5H11.5V3.2H0.5zM0.5 6H7.6V8.7H0.5z" fill="#ececec" stroke-width="1"/></g><path d="M8.6 3.4L15.8 11.6M15.8 3.4L8.6 11.6" fill="none" stroke="#828282" stroke-width="3"/><path d="M8.6 3.4L15.8 11.6M15.8 3.4L8.6 11.6" fill="none" stroke="#ececec" stroke-width="1.1"/></g></svg>
<div class="a" style="left:2px;top:134px;width:722px;height:499px;background:#fff"></div>
<div class="a" style="left:2px;top:134px;width:706px;height:17px;background:#d8d8d8;border-top:1px solid #707070;box-sizing:border-box"></div>
<div class="a" style="left:2px;top:151px;width:706px;height:1px;background:#000"></div>
<div class="a" style="left:2px;top:152px;width:28px;height:481px;background:#d8d8d8"></div>
<div class="a" style="left:30px;top:134px;width:1px;height:499px;background:#000"></div>
<div class="a" style="left:2px;top:135px;width:1px;height:498px;background:#f4f4f4"></div>
<div class="a" style="left:31px;top:152px;width:1px;height:481px;background:#fff"></div>
<div class="a" style="left:31px;top:135px;width:1px;height:16px;background:#fff"></div>
<div class="a" style="left:48px;top:134px;width:1px;height:18px;background:#000"></div>
<div class="hd" style="left:31px;top:136px;width:17px;height:16px;font-size:10.7px;background:none">A</div>
<div class="a" style="left:49px;top:135px;width:1px;height:16px;background:#fff"></div>
<div class="a" style="left:80px;top:134px;width:1px;height:18px;background:#000"></div>
<div class="hd" style="left:49px;top:136px;width:31px;height:16px;font-size:10.7px;background:none">B</div>
<div class="a" style="left:81px;top:135px;width:1px;height:16px;background:#fff"></div>
<div class="a" style="left:156px;top:134px;width:1px;height:18px;background:#000"></div>
<div class="hd" style="left:81px;top:136px;width:75px;height:16px;font-size:10.7px;background:none">C</div>
<div class="a" style="left:157px;top:135px;width:1px;height:16px;background:#fff"></div>
<div class="a" style="left:232px;top:134px;width:1px;height:18px;background:#000"></div>
<div class="hd" style="left:157px;top:136px;width:75px;height:16px;font-size:10.7px;background:none">D</div>
<div class="a" style="left:233px;top:135px;width:1px;height:16px;background:#fff"></div>
<div class="a" style="left:308px;top:134px;width:1px;height:18px;background:#000"></div>
<div class="hd" style="left:233px;top:136px;width:75px;height:16px;font-size:10.7px;background:none">E</div>
<div class="a" style="left:309px;top:135px;width:1px;height:16px;background:#fff"></div>
<div class="a" style="left:384px;top:134px;width:1px;height:18px;background:#000"></div>
<div class="hd" style="left:309px;top:136px;width:75px;height:16px;font-size:10.7px;background:none">F</div>
<div class="a" style="left:385px;top:135px;width:1px;height:16px;background:#fff"></div>
<div class="a" style="left:460px;top:134px;width:1px;height:18px;background:#000"></div>
<div class="hd" style="left:385px;top:136px;width:75px;height:16px;font-size:10.7px;background:none">G</div>
<div class="a" style="left:461px;top:135px;width:1px;height:16px;background:#fff"></div>
<div class="a" style="left:536px;top:134px;width:1px;height:18px;background:#000"></div>
<div class="hd" style="left:461px;top:136px;width:75px;height:16px;font-size:10.7px;background:none">H</div>
<div class="a" style="left:537px;top:135px;width:1px;height:16px;background:#fff"></div>
<div class="a" style="left:612px;top:134px;width:1px;height:18px;background:#000"></div>
<div class="hd" style="left:537px;top:136px;width:75px;height:16px;font-size:10.7px;background:none">I</div>
<div class="a" style="left:613px;top:135px;width:1px;height:16px;background:#fff"></div>
<div class="a" style="left:688px;top:134px;width:1px;height:18px;background:#000"></div>
<div class="hd" style="left:613px;top:136px;width:75px;height:16px;font-size:10.7px;background:none">J</div>
<div class="a" style="left:689px;top:135px;width:1px;height:16px;background:#fff"></div>
<div class="a" style="left:2px;top:169px;width:28px;height:1px;background:#000"></div>
<div class="a" style="left:2px;top:152px;width:28px;height:1px;background:#fff"></div>
<div class="hd" style="left:2px;top:153px;width:28px;height:16px;font-size:10.7px;background:none;line-height:15px">1</div>
<div class="a" style="left:2px;top:186px;width:28px;height:1px;background:#000"></div>
<div class="a" style="left:2px;top:170px;width:28px;height:1px;background:#fff"></div>
<div class="hd" style="left:2px;top:170px;width:28px;height:16px;font-size:10.7px;background:none;line-height:15px">2</div>
<div class="a" style="left:2px;top:202px;width:28px;height:1px;background:#000"></div>
<div class="a" style="left:2px;top:187px;width:28px;height:1px;background:#fff"></div>
<div class="hd" style="left:2px;top:186px;width:28px;height:16px;font-size:10.7px;background:none;line-height:15px">3</div>
<div class="a" style="left:2px;top:218px;width:28px;height:1px;background:#000"></div>
<div class="a" style="left:2px;top:203px;width:28px;height:1px;background:#fff"></div>
<div class="hd" style="left:2px;top:202px;width:28px;height:16px;font-size:10.7px;background:none;line-height:15px">4</div>
<div class="a" style="left:2px;top:234px;width:28px;height:1px;background:#000"></div>
<div class="a" style="left:2px;top:219px;width:28px;height:1px;background:#fff"></div>
<div class="hd" style="left:2px;top:218px;width:28px;height:16px;font-size:10.7px;background:none;line-height:15px">5</div>
<div class="a" style="left:2px;top:250px;width:28px;height:1px;background:#000"></div>
<div class="a" style="left:2px;top:235px;width:28px;height:1px;background:#fff"></div>
<div class="hd" style="left:2px;top:234px;width:28px;height:16px;font-size:10.7px;background:none;line-height:15px">6</div>
<div class="a" style="left:2px;top:266px;width:28px;height:1px;background:#000"></div>
<div class="a" style="left:2px;top:251px;width:28px;height:1px;background:#fff"></div>
<div class="hd" style="left:2px;top:250px;width:28px;height:16px;font-size:10.7px;background:none;line-height:15px">7</div>
<div class="a" style="left:2px;top:282px;width:28px;height:1px;background:#000"></div>
<div class="a" style="left:2px;top:267px;width:28px;height:1px;background:#fff"></div>
<div class="hd" style="left:2px;top:266px;width:28px;height:16px;font-size:10.7px;background:none;line-height:15px">8</div>
<div class="a" style="left:2px;top:298px;width:28px;height:1px;background:#000"></div>
<div class="a" style="left:2px;top:283px;width:28px;height:1px;background:#fff"></div>
<div class="hd" style="left:2px;top:282px;width:28px;height:16px;font-size:10.7px;background:none;line-height:15px">9</div>
<div class="a" style="left:2px;top:314px;width:28px;height:1px;background:#000"></div>
<div class="a" style="left:2px;top:299px;width:28px;height:1px;background:#fff"></div>
<div class="hd" style="left:2px;top:298px;width:28px;height:16px;font-size:10.7px;background:none;line-height:15px">10</div>
<div class="a" style="left:2px;top:330px;width:28px;height:1px;background:#000"></div>
<div class="a" style="left:2px;top:315px;width:28px;height:1px;background:#fff"></div>
<div class="hd" style="left:2px;top:314px;width:28px;height:16px;font-size:10.7px;background:none;line-height:15px">11</div>
<div class="a" style="left:2px;top:346px;width:28px;height:1px;background:#000"></div>
<div class="a" style="left:2px;top:331px;width:28px;height:1px;background:#fff"></div>
<div class="hd" style="left:2px;top:330px;width:28px;height:16px;font-size:10.7px;background:none;line-height:15px">12</div>
<div class="a" style="left:2px;top:362px;width:28px;height:1px;background:#000"></div>
<div class="a" style="left:2px;top:347px;width:28px;height:1px;background:#fff"></div>
<div class="hd" style="left:2px;top:346px;width:28px;height:16px;font-size:10.7px;background:none;line-height:15px">13</div>
<div class="a" style="left:2px;top:378px;width:28px;height:1px;background:#000"></div>
<div class="a" style="left:2px;top:363px;width:28px;height:1px;background:#fff"></div>
<div class="hd" style="left:2px;top:362px;width:28px;height:16px;font-size:10.7px;background:none;line-height:15px">14</div>
<div class="a" style="left:2px;top:394px;width:28px;height:1px;background:#000"></div>
<div class="a" style="left:2px;top:379px;width:28px;height:1px;background:#fff"></div>
<div class="hd" style="left:2px;top:378px;width:28px;height:16px;font-size:10.7px;background:none;line-height:15px">15</div>
<div class="a" style="left:2px;top:410px;width:28px;height:1px;background:#000"></div>
<div class="a" style="left:2px;top:395px;width:28px;height:1px;background:#fff"></div>
<div class="hd" style="left:2px;top:394px;width:28px;height:16px;font-size:10.7px;background:none;line-height:15px">16</div>
<div class="a" style="left:2px;top:426px;width:28px;height:1px;background:#000"></div>
<div class="a" style="left:2px;top:411px;width:28px;height:1px;background:#fff"></div>
<div class="hd" style="left:2px;top:410px;width:28px;height:16px;font-size:10.7px;background:none;line-height:15px">17</div>
<div class="a" style="left:2px;top:442px;width:28px;height:1px;background:#000"></div>
<div class="a" style="left:2px;top:427px;width:28px;height:1px;background:#fff"></div>
<div class="hd" style="left:2px;top:426px;width:28px;height:16px;font-size:10.7px;background:none;line-height:15px">18</div>
<div class="a" style="left:2px;top:458px;width:28px;height:1px;background:#000"></div>
<div class="a" style="left:2px;top:443px;width:28px;height:1px;background:#fff"></div>
<div class="hd" style="left:2px;top:442px;width:28px;height:16px;font-size:10.7px;background:none;line-height:15px">19</div>
<div class="a" style="left:2px;top:474px;width:28px;height:1px;background:#000"></div>
<div class="a" style="left:2px;top:459px;width:28px;height:1px;background:#fff"></div>
<div class="hd" style="left:2px;top:458px;width:28px;height:16px;font-size:10.7px;background:none;line-height:15px">20</div>
<div class="a" style="left:2px;top:490px;width:28px;height:1px;background:#000"></div>
<div class="a" style="left:2px;top:475px;width:28px;height:1px;background:#fff"></div>
<div class="hd" style="left:2px;top:474px;width:28px;height:16px;font-size:10.7px;background:none;line-height:15px">21</div>
<div class="a" style="left:2px;top:506px;width:28px;height:1px;background:#000"></div>
<div class="a" style="left:2px;top:491px;width:28px;height:1px;background:#fff"></div>
<div class="hd" style="left:2px;top:490px;width:28px;height:16px;font-size:10.7px;background:none;line-height:15px">22</div>
<div class="a" style="left:2px;top:522px;width:28px;height:1px;background:#000"></div>
<div class="a" style="left:2px;top:507px;width:28px;height:1px;background:#fff"></div>
<div class="hd" style="left:2px;top:506px;width:28px;height:16px;font-size:10.7px;background:none;line-height:15px">23</div>
<div class="a" style="left:2px;top:538px;width:28px;height:1px;background:#000"></div>
<div class="a" style="left:2px;top:523px;width:28px;height:1px;background:#fff"></div>
<div class="hd" style="left:2px;top:522px;width:28px;height:16px;font-size:10.7px;background:none;line-height:15px">24</div>
<div class="a" style="left:2px;top:554px;width:28px;height:1px;background:#000"></div>
<div class="a" style="left:2px;top:539px;width:28px;height:1px;background:#fff"></div>
<div class="hd" style="left:2px;top:538px;width:28px;height:16px;font-size:10.7px;background:none;line-height:15px">25</div>
<div class="a" style="left:2px;top:570px;width:28px;height:1px;background:#000"></div>
<div class="a" style="left:2px;top:555px;width:28px;height:1px;background:#fff"></div>
<div class="hd" style="left:2px;top:554px;width:28px;height:16px;font-size:10.7px;background:none;line-height:15px">26</div>
<div class="a" style="left:2px;top:586px;width:28px;height:1px;background:#000"></div>
<div class="a" style="left:2px;top:571px;width:28px;height:1px;background:#fff"></div>
<div class="hd" style="left:2px;top:570px;width:28px;height:16px;font-size:10.7px;background:none;line-height:15px">27</div>
<div class="a" style="left:2px;top:602px;width:28px;height:1px;background:#000"></div>
<div class="a" style="left:2px;top:587px;width:28px;height:1px;background:#fff"></div>
<div class="hd" style="left:2px;top:586px;width:28px;height:16px;font-size:10.7px;background:none;line-height:15px">28</div>
<div class="a" style="left:2px;top:618px;width:28px;height:1px;background:#000"></div>
<div class="a" style="left:2px;top:603px;width:28px;height:1px;background:#fff"></div>
<div class="hd" style="left:2px;top:602px;width:28px;height:16px;font-size:10.7px;background:none;line-height:15px">29</div>
<div class="a" style="left:2px;top:619px;width:28px;height:1px;background:#fff"></div>
<div class="hd" style="left:2px;top:618px;width:28px;height:16px;font-size:10.7px;background:none;line-height:15px">30</div>
<div class="a" style="left:32px;top:152px;width:1px;height:481px;background:#c0c0c0"></div>
<div class="a" style="left:48px;top:152px;width:1px;height:481px;background:#c0c0c0"></div>
<div class="a" style="left:80px;top:152px;width:1px;height:481px;background:#c0c0c0"></div>
<div class="a" style="left:156px;top:152px;width:1px;height:481px;background:#c0c0c0"></div>
<div class="a" style="left:232px;top:152px;width:1px;height:481px;background:#c0c0c0"></div>
<div class="a" style="left:308px;top:152px;width:1px;height:481px;background:#c0c0c0"></div>
<div class="a" style="left:384px;top:152px;width:1px;height:481px;background:#c0c0c0"></div>
<div class="a" style="left:460px;top:152px;width:1px;height:481px;background:#c0c0c0"></div>
<div class="a" style="left:536px;top:152px;width:1px;height:481px;background:#c0c0c0"></div>
<div class="a" style="left:612px;top:152px;width:1px;height:481px;background:#c0c0c0"></div>
<div class="a" style="left:688px;top:152px;width:1px;height:481px;background:#c0c0c0"></div>
<div class="a" style="left:708px;top:152px;width:1px;height:481px;background:#c0c0c0"></div>
<div class="a" style="left:32px;top:153px;width:677px;height:1px;background:#c0c0c0"></div>
<div class="a" style="left:32px;top:169px;width:677px;height:1px;background:#c0c0c0"></div>
<div class="a" style="left:32px;top:186px;width:677px;height:1px;background:#c0c0c0"></div>
<div class="a" style="left:32px;top:202px;width:677px;height:1px;background:#c0c0c0"></div>
<div class="a" style="left:32px;top:218px;width:677px;height:1px;background:#c0c0c0"></div>
<div class="a" style="left:32px;top:234px;width:677px;height:1px;background:#c0c0c0"></div>
<div class="a" style="left:32px;top:250px;width:677px;height:1px;background:#c0c0c0"></div>
<div class="a" style="left:32px;top:266px;width:677px;height:1px;background:#c0c0c0"></div>
<div class="a" style="left:32px;top:282px;width:677px;height:1px;background:#c0c0c0"></div>
<div class="a" style="left:32px;top:298px;width:677px;height:1px;background:#c0c0c0"></div>
<div class="a" style="left:32px;top:314px;width:677px;height:1px;background:#c0c0c0"></div>
<div class="a" style="left:32px;top:330px;width:677px;height:1px;background:#c0c0c0"></div>
<div class="a" style="left:32px;top:346px;width:677px;height:1px;background:#c0c0c0"></div>
<div class="a" style="left:32px;top:362px;width:677px;height:1px;background:#c0c0c0"></div>
<div class="a" style="left:32px;top:378px;width:677px;height:1px;background:#c0c0c0"></div>
<div class="a" style="left:32px;top:394px;width:677px;height:1px;background:#c0c0c0"></div>
<div class="a" style="left:32px;top:410px;width:677px;height:1px;background:#c0c0c0"></div>
<div class="a" style="left:32px;top:426px;width:677px;height:1px;background:#c0c0c0"></div>
<div class="a" style="left:32px;top:442px;width:677px;height:1px;background:#c0c0c0"></div>
<div class="a" style="left:32px;top:458px;width:677px;height:1px;background:#c0c0c0"></div>
<div class="a" style="left:32px;top:474px;width:677px;height:1px;background:#c0c0c0"></div>
<div class="a" style="left:32px;top:490px;width:677px;height:1px;background:#c0c0c0"></div>
<div class="a" style="left:32px;top:506px;width:677px;height:1px;background:#c0c0c0"></div>
<div class="a" style="left:32px;top:522px;width:677px;height:1px;background:#c0c0c0"></div>
<div class="a" style="left:32px;top:538px;width:677px;height:1px;background:#c0c0c0"></div>
<div class="a" style="left:32px;top:554px;width:677px;height:1px;background:#c0c0c0"></div>
<div class="a" style="left:32px;top:570px;width:677px;height:1px;background:#c0c0c0"></div>
<div class="a" style="left:32px;top:586px;width:677px;height:1px;background:#c0c0c0"></div>
<div class="a" style="left:32px;top:602px;width:677px;height:1px;background:#c0c0c0"></div>
<div class="a" style="left:32px;top:618px;width:677px;height:1px;background:#c0c0c0"></div>
<div class="a" style="left:688px;top:152px;width:1px;height:481px;background:#808080"></div>
<div class="a" style="left:49px;top:170px;width:31px;height:16px;background:#dcffff"></div>
<div class="a" style="left:81px;top:170px;width:75px;height:16px;background:#dcffff"></div>
<div class="a" style="left:157px;top:170px;width:75px;height:16px;background:#dcffff"></div>
<div class="a" style="left:233px;top:170px;width:75px;height:16px;background:#dcffff"></div>
<div class="a" style="left:49px;top:187px;width:31px;height:15px;background:#dcffff"></div>
<div class="a" style="left:81px;top:187px;width:75px;height:15px;background:#ffffe1"></div>
<div class="a" style="left:157px;top:187px;width:75px;height:15px;background:#ffffe1"></div>
<div class="a" style="left:233px;top:187px;width:75px;height:15px;background:#ffffe1"></div>
<div class="a" style="left:49px;top:203px;width:31px;height:15px;background:#dcffff"></div>
<div class="a" style="left:81px;top:203px;width:75px;height:15px;background:#ffffe1"></div>
<div class="a" style="left:157px;top:203px;width:75px;height:15px;background:#ffffe1"></div>
<div class="a" style="left:233px;top:203px;width:75px;height:15px;background:#ffffe1"></div>
<div class="a" style="left:49px;top:219px;width:31px;height:15px;background:#dcffff"></div>
<div class="a" style="left:81px;top:219px;width:75px;height:15px;background:#ffffe1"></div>
<div class="a" style="left:157px;top:219px;width:75px;height:15px;background:#ffffe1"></div>
<div class="a" style="left:233px;top:219px;width:75px;height:15px;background:#ffffe1"></div>
<div class="a" style="left:49px;top:235px;width:31px;height:15px;background:#dcffff"></div>
<div class="a" style="left:81px;top:235px;width:75px;height:15px;background:#ffffe1"></div>
<div class="a" style="left:157px;top:235px;width:75px;height:15px;background:#ffffe1"></div>
<div class="a" style="left:233px;top:235px;width:75px;height:15px;background:#ffffe1"></div>
<div class="a" style="left:80px;top:186px;width:228px;height:1px;background:#000"></div>
<div class="a" style="left:80px;top:186px;width:1px;height:64px;background:#000"></div>
<div class="cell" style="left:80px;width:74.5px;top:169px;text-align:right;font-weight:bold">2000</div>
<div class="cell" style="left:156px;width:74.5px;top:169px;text-align:right;font-weight:bold">2001</div>
<div class="cell" style="left:232px;width:72.5px;top:169px;text-align:right;font-weight:bold">2002</div>
<div class="cell" style="left:50px;top:186px;font-weight:bold">Q1</div>
<div class="cell" style="left:80px;width:74px;top:186px;text-align:right">€ 42,867</div>
<div class="cell" style="left:156px;width:74px;top:186px;text-align:right">€ 48,107</div>
<div class="cell" style="left:232px;width:72px;top:186px;text-align:right">€ 55,381</div>
<div class="cell" style="left:50px;top:202px;font-weight:bold">Q2</div>
<div class="cell" style="left:80px;width:74px;top:202px;text-align:right">€ 53,864</div>
<div class="cell" style="left:156px;width:74px;top:202px;text-align:right">€ 58,923</div>
<div class="cell" style="left:232px;width:72px;top:202px;text-align:right">€ 72,846</div>
<div class="cell" style="left:50px;top:218px;font-weight:bold">Q3</div>
<div class="cell" style="left:80px;width:74px;top:218px;text-align:right">€ 55,925</div>
<div class="cell" style="left:156px;width:74px;top:218px;text-align:right">€ 62,505</div>
<div class="cell" style="left:232px;width:72px;top:218px;text-align:right">€ 71,095</div>
<div class="cell" style="left:50px;top:234px;font-weight:bold">Q4</div>
<div class="cell" style="left:80px;width:74px;top:234px;text-align:right">€ 47,810</div>
<div class="cell" style="left:156px;width:74px;top:234px;text-align:right">€ 50,240</div>
<div class="cell" style="left:232px;width:72px;top:234px;text-align:right">€ 60,761</div>
<div class="a" style="left:48px;top:169px;width:261px;height:82px;border:2px solid #0000ff;box-sizing:border-box"></div>
<div class="a" style="left:304px;top:246px;width:5px;height:5px;background:#0000ff;box-shadow:0 0 0 1px #ffffe1"></div>
<div class="a" style="left:264px;top:282px;width:337px;height:257px;background:#fff;border:1px solid #ff0000;box-sizing:border-box"></div>
<svg style="left:0;top:0" width="726" height="707" viewBox="0 0 726 707" font-family="Liberation Sans,sans-serif">
<defs>
<linearGradient id="gb" x1="0" x2="1" y1="0" y2="0"><stop offset="0" stop-color="#9292f2"/><stop offset="0.18" stop-color="#9c9cff"/><stop offset="0.45" stop-color="#8e8eec"/><stop offset="0.8" stop-color="#6c6cba"/><stop offset="1" stop-color="#56569c"/></linearGradient>
<linearGradient id="gm" x1="0" x2="1" y1="0" y2="0"><stop offset="0" stop-color="#93305f"/><stop offset="0.2" stop-color="#9b3468"/><stop offset="0.5" stop-color="#8a2d5b"/><stop offset="0.8" stop-color="#6a2246"/><stop offset="1" stop-color="#541a37"/></linearGradient>
<linearGradient id="gc" x1="0" x2="1" y1="0" y2="0"><stop offset="0" stop-color="#f4f4c4"/><stop offset="0.2" stop-color="#ffffd0"/><stop offset="0.5" stop-color="#eaeaba"/><stop offset="0.8" stop-color="#b6b690"/><stop offset="1" stop-color="#9c9c7a"/></linearGradient>
</defs>
<polygon points="335.0,315.0 393.3,293.0 395.0,423.0 339.7,457.8" fill="#c0c0c0"/>
<polygon points="393.3,293.0 561.7,303.3 556.7,435.8 395.0,423.0" fill="#c0c0c0"/>
<polygon points="339.7,457.8 395.0,423.0 556.7,435.8 521.8,482.0" fill="#808080"/>
<path d="M335.0 315.0L393.3 293.0M393.3 293.0L561.7 303.3M330.0 315.0L335.0 315.0M335.6 334.0L393.5 309.2M393.5 309.2L561.1 319.9M330.6 334.0L335.6 334.0M336.2 352.2L393.7 325.5M393.7 325.5L560.5 336.4M331.2 352.2L336.2 352.2M336.8 370.3L393.9 341.8M393.9 341.8L559.8 353.0M331.8 370.3L336.8 370.3M337.4 388.2L394.1 358.0M394.1 358.0L559.2 369.6M332.4 388.2L337.4 388.2M338.0 406.0L394.4 374.2M394.4 374.2L558.6 386.1M333.0 406.0L338.0 406.0M338.6 423.4L394.6 390.5M394.6 390.5L558.0 402.7M333.6 423.4L338.6 423.4M339.1 440.9L394.8 406.8M394.8 406.8L557.3 419.2M334.1 440.9L339.1 440.9M334.7 457.8L339.7 457.8M356.7 307.5L360.5 444.5M375.3 300.3L378.5 433.0M335.0 315.0L339.7 457.8M393.3 293.0L395.0 423.0M561.7 303.3L556.7 435.8M434.2 295.5L434.3 426.1M474.7 298.0L473.1 429.2M518.0 300.6L514.7 432.5M382.5 464.2L434.3 426.1M427.3 470.8L473.1 429.2M473.3 476.3L514.7 432.5M360.5 444.5L535.0 465.0M378.5 433.0L547.5 450.0M339.7 457.8L521.8 482.0M521.8 482.0L556.7 435.8M339.7 457.8L395.0 423.0M395.0 423.0L556.7 435.8M339.5 456.0L340.2 461.8M382.3 462.4L383.0 468.2M427.1 469.0L427.8 474.8M473.1 474.5L473.8 480.3M521.6 480.2L522.3 486.0M533.2 464.8L539.0 465.5M545.7 449.8L551.5 450.5M520.0 481.8L525.8 482.5M554.9 435.6L560.7 436.3" stroke="#000" stroke-width="0.9" fill="none"/>
<path d="M395.2 339.2L396.0 426.0A10.4 2.5 0 0 0 416.8 426.0L415.7 339.2A10.2 2.5 0 0 1 395.2 339.2z" fill="url(#gc)" stroke="#3a3a24" stroke-width="0.8"/>
<ellipse cx="405.4" cy="339.2" rx="10.2" ry="2.5" fill="#dedeae" stroke="#3a3a24" stroke-width="0.8"/>
<path d="M435.8 313.8L435.4 430.3A11.0 2.5 0 0 0 457.4 430.3L457.5 313.8A10.8 2.5 0 0 1 435.8 313.8z" fill="url(#gc)" stroke="#3a3a24" stroke-width="0.8"/>
<ellipse cx="446.6" cy="313.8" rx="10.8" ry="2.5" fill="#dedeae" stroke="#3a3a24" stroke-width="0.8"/>
<path d="M478.1 319.6L476.1 435.3A11.2 2.5 0 0 0 498.6 435.3L500.2 319.6A11.1 2.5 0 0 1 478.1 319.6z" fill="url(#gc)" stroke="#3a3a24" stroke-width="0.8"/>
<ellipse cx="489.1" cy="319.6" rx="11.1" ry="2.5" fill="#dedeae" stroke="#3a3a24" stroke-width="0.8"/>
<path d="M521.9 340.0L518.8 440.3A11.0 2.5 0 0 0 540.8 440.3L543.6 340.0A10.8 2.5 0 0 1 521.9 340.0z" fill="url(#gc)" stroke="#3a3a24" stroke-width="0.8"/>
<ellipse cx="532.8" cy="340.0" rx="10.8" ry="2.5" fill="#dedeae" stroke="#3a3a24" stroke-width="0.8"/>
<path d="M376.9 361.0L378.0 439.2A11.6 2.5 0 0 0 401.1 439.2L399.7 361.0A11.4 2.5 0 0 1 376.9 361.0z" fill="url(#gm)" stroke="#240a16" stroke-width="0.8"/>
<ellipse cx="388.3" cy="361.0" rx="11.4" ry="2.5" fill="#76264e" stroke="#240a16" stroke-width="0.8"/>
<path d="M419.5 345.4L419.7 444.2A11.1 2.5 0 0 0 441.9 444.2L441.4 345.4A10.9 2.5 0 0 1 419.5 345.4z" fill="url(#gm)" stroke="#240a16" stroke-width="0.8"/>
<ellipse cx="430.4" cy="345.4" rx="10.9" ry="2.5" fill="#76264e" stroke="#240a16" stroke-width="0.8"/>
<path d="M462.7 343.0L461.4 449.2A11.7 2.5 0 0 0 484.7 449.2L485.7 343.0A11.5 2.5 0 0 1 462.7 343.0z" fill="url(#gm)" stroke="#240a16" stroke-width="0.8"/>
<ellipse cx="474.2" cy="343.0" rx="11.5" ry="2.5" fill="#76264e" stroke="#240a16" stroke-width="0.8"/>
<path d="M507.8 368.0L505.4 455.2A11.9 2.5 0 0 0 529.2 455.2L531.2 368.0A11.7 2.5 0 0 1 507.8 368.0z" fill="url(#gm)" stroke="#240a16" stroke-width="0.8"/>
<ellipse cx="519.5" cy="368.0" rx="11.7" ry="2.5" fill="#76264e" stroke="#240a16" stroke-width="0.8"/>
<path d="M358.1 380.9L359.5 453.0A11.9 2.5 0 0 0 383.3 453.0L381.5 380.9A11.7 2.5 0 0 1 358.1 380.9z" fill="url(#gb)" stroke="#1e1e44" stroke-width="0.8"/>
<ellipse cx="369.8" cy="380.9" rx="11.7" ry="2.5" fill="#7c7ccc" stroke="#1e1e44" stroke-width="0.8"/>
<path d="M400.8 365.0L401.4 459.3A12.2 2.5 0 0 0 425.7 459.3L424.7 365.0A12.0 2.5 0 0 1 400.8 365.0z" fill="url(#gb)" stroke="#1e1e44" stroke-width="0.8"/>
<ellipse cx="412.7" cy="365.0" rx="12.0" ry="2.5" fill="#7c7ccc" stroke="#1e1e44" stroke-width="0.8"/>
<path d="M446.7 365.0L445.9 465.1A12.1 2.5 0 0 0 470.1 465.1L470.5 365.0A11.9 2.5 0 0 1 446.7 365.0z" fill="url(#gb)" stroke="#1e1e44" stroke-width="0.8"/>
<ellipse cx="458.6" cy="365.0" rx="11.9" ry="2.5" fill="#7c7ccc" stroke="#1e1e44" stroke-width="0.8"/>
<path d="M493.7 384.0L491.7 470.9A12.3 2.5 0 0 0 516.4 470.9L518.0 384.0A12.2 2.5 0 0 1 493.7 384.0z" fill="url(#gb)" stroke="#1e1e44" stroke-width="0.8"/>
<ellipse cx="505.9" cy="384.0" rx="12.2" ry="2.5" fill="#7c7ccc" stroke="#1e1e44" stroke-width="0.8"/>
<text x="326.3" y="318.7" font-size="10.5" text-anchor="end" textLength="42.3" lengthAdjust="spacing">€ 80,000</text>
<text x="326.9" y="337.7" font-size="10.5" text-anchor="end" textLength="42.3" lengthAdjust="spacing">€ 70,000</text>
<text x="327.5" y="355.9" font-size="10.5" text-anchor="end" textLength="42.3" lengthAdjust="spacing">€ 60,000</text>
<text x="328.1" y="374.0" font-size="10.5" text-anchor="end" textLength="42.3" lengthAdjust="spacing">€ 50,000</text>
<text x="328.7" y="391.9" font-size="10.5" text-anchor="end" textLength="42.3" lengthAdjust="spacing">€ 40,000</text>
<text x="329.3" y="409.7" font-size="10.5" text-anchor="end" textLength="42.3" lengthAdjust="spacing">€ 30,000</text>
<text x="329.9" y="427.1" font-size="10.5" text-anchor="end" textLength="42.3" lengthAdjust="spacing">€ 20,000</text>
<text x="330.5" y="444.6" font-size="10.5" text-anchor="end" textLength="42.3" lengthAdjust="spacing">€ 10,000</text>
<text x="331.0" y="461.5" font-size="10.5" text-anchor="end" textLength="14.5" lengthAdjust="spacing">€ 0</text>
<text x="353" y="481.7" font-size="10.5">Q1</text>
<text x="397" y="486.8" font-size="10.5">Q2</text>
<text x="442.3" y="492.6" font-size="10.5">Q3</text>
<text x="489.8" y="499.8" font-size="10.5">Q4</text>
<text x="560.3" y="446" font-size="10.5" textLength="23" lengthAdjust="spacing">2002</text>
<text x="548.6" y="461" font-size="10.5" textLength="23" lengthAdjust="spacing">2001</text>
<text x="535.6" y="476.8" font-size="10.5" textLength="23" lengthAdjust="spacing">2000</text>
<rect x="367.5" y="517.5" width="130" height="18" fill="#fff" stroke="#000" stroke-width="1"/>
<rect x="372.5" y="523.5" width="7" height="7" fill="#9999ff" stroke="#000" stroke-width="1"/>
<text x="382.5" y="530.6" font-size="10.5" textLength="23.3" lengthAdjust="spacing">2000</text>
<rect x="416.5" y="523.5" width="7" height="7" fill="#993366" stroke="#000" stroke-width="1"/>
<text x="426.5" y="530.6" font-size="10.5" textLength="23.3" lengthAdjust="spacing">2001</text>
<rect x="459.5" y="523.5" width="7" height="7" fill="#ffffcc" stroke="#000" stroke-width="1"/>
<text x="469.5" y="530.6" font-size="10.5" textLength="23.3" lengthAdjust="spacing">2002</text>
</svg>
<div class="a" style="left:260px;top:278px;width:9px;height:9px;box-sizing:border-box;background:#fff;border:1px solid #000;box-shadow:1px 1px 0 #000"></div>
<div class="a" style="left:596px;top:278px;width:9px;height:9px;box-sizing:border-box;background:#fff;border:1px solid #000;box-shadow:1px 1px 0 #000"></div>
<div class="a" style="left:260px;top:534px;width:9px;height:9px;box-sizing:border-box;background:#fff;border:1px solid #000;box-shadow:1px 1px 0 #000"></div>
<div class="a" style="left:596px;top:534px;width:9px;height:9px;box-sizing:border-box;background:#fff;border:1px solid #000;box-shadow:1px 1px 0 #000"></div>
<div class="a" style="left:709px;top:134px;width:15px;height:499px;background:linear-gradient(90deg,#c4c4c4,#cfcfcf)"></div>
<div class="a" style="left:708px;top:152px;width:1px;height:481px;background:#606060"></div>
<div class="a" style="left:708px;top:134px;width:16px;height:1px;background:#d8d8d8"></div>
<div class="a" style="left:709px;top:135px;width:15px;height:16px;background:linear-gradient(90deg,#fff,#d4d4d4);border-bottom:1px solid #555;border-top:1px solid #fff;border-left:1px solid #fff;box-sizing:border-box"></div>
<svg style="left:711px;top:139px" width="11" height="7"><path d="M0.8 6L5.3 0.8L9.8 6z" fill="#000"/></svg>
<div class="a" style="left:709px;top:151px;width:15px;height:1px;background:#555"></div>
<div class="a" style="left:709px;top:152px;width:15px;height:167px;background:linear-gradient(90deg,#fcfcfc,#dcdcdc);border-bottom:1px solid #555;border-left:1px solid #fff;box-sizing:border-box"></div>
<div class="a" style="left:712px;top:232px;width:9px;height:1px;background:#a0a0a0;box-shadow:0 1px 0 #fff"></div>
<div class="a" style="left:712px;top:235px;width:9px;height:1px;background:#a0a0a0;box-shadow:0 1px 0 #fff"></div>
<div class="a" style="left:712px;top:238px;width:9px;height:1px;background:#a0a0a0;box-shadow:0 1px 0 #fff"></div>
<div class="a" style="left:708px;top:568px;width:16px;height:16px;background:linear-gradient(90deg,#fff,#d4d4d4);border:1px solid #444;border-right:none;box-sizing:border-box"></div>
<svg style="left:711px;top:574px" width="11" height="6"><path d="M0.8 0.3h9L5.3 5.5z" fill="#000"/></svg>
<div class="a" style="left:708px;top:584px;width:16px;height:15px;background:linear-gradient(90deg,#fff 0,#fff 25%,#d0d0d0)"></div>
<div class="a" style="left:708px;top:599px;width:16px;height:1px;background:#555"></div>
<div class="a" style="left:708px;top:600px;width:16px;height:15px;background:linear-gradient(90deg,#fff 0,#fff 25%,#d0d0d0)"></div>
<div class="a" style="left:708px;top:615px;width:16px;height:1px;background:#555"></div>
<div class="a" style="left:708px;top:616px;width:16px;height:17px;background:linear-gradient(90deg,#fff 0,#fff 25%,#d0d0d0)"></div>
<svg style="left:712px;top:588px" width="8" height="8"><path d="M1 3.8L3.5 1L6 3.8zM1 7.4L3.5 4.6L6 7.4z" fill="#000" stroke="#000" stroke-width="0.5"/></svg>
<svg style="left:712px;top:620px" width="8" height="8"><path d="M1 0.8h5L3.5 3.6zM1 4.4h5L3.5 7.2z" fill="#000" stroke="#000" stroke-width="0.5"/></svg>
<div class="a" style="left:713px;top:606px;width:5px;height:5px;border-radius:3px;background:radial-gradient(circle at 30% 30%,#ff20ff,#e00010 60%)"></div>
<div class="a" style="left:2px;top:633px;width:722px;height:16px;background:#808080"></div>
<div class="a" style="left:2px;top:633px;width:374px;height:1px;background:#000"></div>
<div class="a" style="left:378px;top:648px;width:346px;height:1px;background:#4a4a4a"></div>
<div class="a" style="left:375px;top:633px;width:3px;height:15px;background:linear-gradient(90deg,#fff,#e4e4e4)"></div>
<div class="a" style="left:378px;top:633px;width:330px;height:15px;background:linear-gradient(#c2c2c2,#d2d2d2);border-top:1px solid #555;border-left:1px solid #555;box-sizing:border-box"></div>
<div class="a" style="left:379px;top:634px;width:16px;height:14px;background:linear-gradient(#fff,#d4d4d4);border-left:1px solid #fff;border-top:1px solid #fff;box-sizing:border-box"></div>
<div class="a" style="left:395px;top:634px;width:1px;height:14px;background:#555"></div>
<svg style="left:383px;top:636px" width="6" height="10"><path d="M5.6 0.3v9.4L0.4 5z" fill="#000"/></svg>
<div class="a" style="left:396px;top:634px;width:85px;height:14px;background:linear-gradient(#fcfcfc,#d8d8d8);border-left:1px solid #fff;border-top:1px solid #fff;border-right:1px solid #555;box-sizing:border-box"></div>
<div class="a" style="left:433px;top:637px;width:1px;height:8px;background:#a0a0a0;box-shadow:1px 0 0 #fff"></div>
<div class="a" style="left:436px;top:637px;width:1px;height:8px;background:#a0a0a0;box-shadow:1px 0 0 #fff"></div>
<div class="a" style="left:439px;top:637px;width:1px;height:8px;background:#a0a0a0;box-shadow:1px 0 0 #fff"></div>
<div class="a" style="left:692px;top:634px;width:1px;height:14px;background:#555"></div>
<div class="a" style="left:693px;top:634px;width:15px;height:14px;background:linear-gradient(#fff,#d4d4d4);border-left:1px solid #fff;border-top:1px solid #fff;box-sizing:border-box"></div>
<svg style="left:698px;top:636px" width="6" height="10"><path d="M0.4 0.3v9.4L5.6 5z" fill="#000"/></svg>
<div class="a" style="left:708px;top:632px;width:16px;height:17px;background:#fff;border:1px solid #000;border-right:none;box-sizing:border-box"></div>
<svg style="left:709px;top:633px" width="15" height="15"><path d="M1 3.5h12M4.5 1v13" stroke="#000" stroke-width="1" fill="none"/><path d="M7 6h4l-1.3 1.3 2.8 2.8-1.2 1.2-2.8-2.8L7 10z" fill="#000"/></svg>
<div class="a" style="left:2px;top:634px;width:16px;height:14px;background:linear-gradient(#fcfcfc,#d6d6d6);border-left:1px solid #fff;border-right:1px solid #777;box-sizing:border-box"></div>
<div class="a" style="left:18px;top:634px;width:16px;height:14px;background:linear-gradient(#fcfcfc,#d6d6d6);border-left:1px solid #fff;border-right:1px solid #777;box-sizing:border-box"></div>
<div class="a" style="left:34px;top:634px;width:16px;height:14px;background:linear-gradient(#fcfcfc,#d6d6d6);border-left:1px solid #fff;border-right:1px solid #777;box-sizing:border-box"></div>
<div class="a" style="left:50px;top:634px;width:16px;height:14px;background:linear-gradient(#fcfcfc,#d6d6d6);border-left:1px solid #fff;border-right:1px solid #777;box-sizing:border-box"></div>
<svg style="left:2px;top:634px" width="64" height="14"><g fill="#000"><path d="M5 3h1.6v8H5zM6.6 7l3.2-3.4v2.2h2.6v2.4H9.8v2.2z"/><path d="M20.5 7l3.6-3.6v2.4h3.4v2.4h-3.4v2.4z"/><path d="M43.5 7l-3.6-3.6v2.4h-3.4v2.4h3.4v2.4z"/><path d="M59.4 3H61v8h-1.6zM59.4 7l-3.2-3.4v2.2h-2.6v2.4h2.6v2.2z"/></g></svg>
<svg style="left:66px;top:633px" width="72" height="16"><path d="M0 0L8 15.5H61L68.5 0z" fill="#fff"/><path d="M1 0.5L8 15.5H61L68 0.5" fill="none" stroke="#000" stroke-width="1"/><path d="M0 0L7.5 15.5H2L0 12z" fill="#808080"/></svg>
<div class="a" style="left:76px;top:634.5px;width:48px;text-align:center;font:bold 10.7px/14px 'DejaVu Sans Condensed','DejaVu Sans',sans-serif;letter-spacing:-1.05px;white-space:nowrap">&lt;Sheet1&gt;</div>
<div class="bar" style="top:649px;height:28px;background:linear-gradient(#fff 0,#fff 1px,#f5f5f5 1px,#ebebeb 50%,#d0d0d0)"></div>
<div class="bar" style="top:677px;height:1px;background:#9a9a9a"></div>
<div class="bar" style="top:678px;height:27px;background:linear-gradient(#fff 0,#fff 1px,#f5f5f5 1px,#ebebeb 50%,#d0d0d0)"></div>
<div class="a" style="left:105px;top:652px;width:221px;height:21px;background:#fff;box-sizing:border-box;border:1px solid;border-color:#808080 #fff #fff #808080;box-shadow:inset 1px 1px 0 #000,inset -1px -1px 0 #dcdcdc"></div>
<div class="a ui" style="left:109px;top:656px;line-height:15px;word-spacing:1.5px;letter-spacing:0">Chart Area</div>
<div class="a" style="left:309px;top:654px;width:16px;height:17px;background:linear-gradient(#f8f8f8,#d8d8d8);border:1px solid;border-color:#fff #000 #000 #fff;box-sizing:border-box;box-shadow:inset -1px -1px 0 #808080"></div>
<svg style="left:313px;top:660px" width="8" height="5"><path d="M0 0h7.4l-3.7 4.2z" fill="#000"/></svg>
<div class="a ui" style="left:10px;top:684px;width:334px;height:15px;box-sizing:border-box;border:1px solid;border-color:#808080 #fff #fff #808080;background:none;line-height:13px;text-align:left;padding:0 4px;white-space:nowrap"></div>
<div class="a ui" style="left:352px;top:684px;width:110px;height:15px;box-sizing:border-box;border:1px solid;border-color:#808080 #fff #fff #808080;background:none;line-height:13px;text-align:left;padding:0 3px;white-space:nowrap">Sheet1</div>
<div class="a ui" style="left:470px;top:684px;width:120px;height:15px;box-sizing:border-box;border:1px solid;border-color:#808080 #fff #fff #808080;background:none;line-height:13px;text-align:left;padding:0 3px;white-space:nowrap">Sum=686327</div>
<div class="a ui" style="left:629px;top:684px;width:40px;height:15px;box-sizing:border-box;border:1px solid;border-color:#808080 #fff #fff #808080;background:none;line-height:13px;text-align:center;padding:0 0px;white-space:nowrap">Ins</div>
<div class="a ui" style="left:677px;top:684px;width:39px;height:15px;box-sizing:border-box;border:1px solid;border-color:#808080 #fff #fff #808080;background:none;line-height:13px;text-align:center;padding:0 0px;white-space:nowrap">AUTO</div><svg style="left:0;top:0" width="726" height="707" viewBox="0 0 726 707"><g transform="translate(12,654)"><path d="M1.5 0.5V16.5H17" fill="none" stroke="#909090" stroke-width="1"/><path d="M3 16V9L4.4 7.8H6.4V16z" fill="#e85868" stroke="#b02838" stroke-width="0.6"/><path d="M6.6 16V3L8 1.6H10V16z" fill="#88a0e8" stroke="#4860b0" stroke-width="0.6"/><path d="M9.2 16V10L10.6 8.8H12.6V16z" fill="#e85868" stroke="#b02838" stroke-width="0.6"/><path d="M12.8 16V5.6L14.2 4.4H16.2V16z" fill="#88a0e8" stroke="#4860b0" stroke-width="0.6"/></g><path d="M38 662h7l-3.5 4z" fill="#000"/><g transform="translate(63,655)"><path d="M0.6 2.6Q0.6 0.5 5.5 0.5T10.4 2.6V13.4Q10.4 15.6 5.5 15.6T0.6 13.4z" fill="#0828f8" stroke="#000" stroke-width="1.1"/><path d="M1.4 3.2Q5.5 4.8 9.6 3.2" fill="none" stroke="#000" stroke-width="0.7"/><path d="M3 5.5V14M4.6 5.8V14.4" stroke="#30a0ff" stroke-width="0.9" stroke-dasharray="1 1"/></g><path d="M86 662h7l-3.5 4z" fill="#000"/><g transform="translate(332,654)"><path d="M2.5 1V17M0.8 3L2.5 0.8L4.2 3M0.8 15L2.5 17.2L4.2 15" fill="none" stroke="#404040" stroke-width="0.9"/><rect x="5.6" y="5" width="3" height="10" fill="#f07080" stroke="#c03040" stroke-width="0.7"/><rect x="10.6" y="1.5" width="3" height="9" fill="#90a8f0" stroke="#4860b0" stroke-width="0.7"/><circle cx="12.4" cy="12.4" r="5.1" fill="url(#ib)" stroke="#1840b0" stroke-width="0.6"/><rect x="11.6" y="11.6" width="1.7" height="3.6" fill="#fff"/><rect x="11.6" y="9.4" width="1.7" height="1.5" fill="#fff"/></g><g transform="translate(356,654)"><rect x="1.5" y="1.5" width="15" height="15" fill="url(#fr)" stroke="#000" stroke-width="1.15"/><rect x="5" y="5" width="2.6" height="9" fill="#f07080" stroke="#c03040" stroke-width="0.6"/><rect x="10" y="3.5" width="2.6" height="7" fill="#90a8f0" stroke="#4860b0" stroke-width="0.6"/><rect x="0.5" y="0.5" width="3" height="3" fill="#ffe860" stroke="#000" stroke-width="1"/><rect x="14.5" y="0.5" width="3" height="3" fill="#ffe860" stroke="#000" stroke-width="1"/><rect x="0.5" y="14.5" width="3" height="3" fill="#ffe860" stroke="#000" stroke-width="1"/><rect x="14.5" y="14.5" width="3" height="3" fill="#ffe860" stroke="#000" stroke-width="1"/><circle cx="13.2" cy="12.8" r="5.1" fill="url(#ib)" stroke="#1840b0" stroke-width="0.6"/><rect x="12.399999999999999" y="12.0" width="1.7" height="3.6" fill="#fff"/><rect x="12.399999999999999" y="9.8" width="1.7" height="1.5" fill="#fff"/></g><rect x="380" y="655" width="1" height="17" fill="#8c8c8c"/><rect x="381" y="655" width="1" height="17" fill="#fff"/><rect x="384" y="652" width="24" height="22" fill="url(#chk)"/><path d="M384.5 674V652.5H408" stroke="#707070" fill="none"/><path d="M385 673.5H407.5V653" stroke="#fff" fill="none"/><g transform="translate(387,654)"><rect x="0" y="0" width="17" height="17" fill="#8494bc"/><rect x="1" y="1" width="3" height="3" fill="url(#yh)"/><rect x="5" y="1" width="3" height="3" fill="url(#yh)"/><rect x="9" y="1" width="3" height="3" fill="url(#yh)"/><rect x="13" y="1" width="3" height="3" fill="url(#yh)"/><rect x="1" y="5" width="3" height="3" fill="url(#cc)"/><rect x="5" y="5" width="3" height="3" fill="url(#cc)"/><rect x="9" y="5" width="3" height="3" fill="url(#cc)"/><rect x="13" y="5" width="3" height="3" fill="url(#cc)"/><rect x="1" y="9" width="3" height="3" fill="url(#cc)"/><rect x="5" y="9" width="3" height="3" fill="url(#cc)"/><rect x="9" y="9" width="3" height="3" fill="url(#cc)"/><rect x="13" y="9" width="3" height="3" fill="url(#cc)"/><rect x="1" y="13" width="3" height="3" fill="url(#cc)"/><rect x="5" y="13" width="3" height="3" fill="url(#cc)"/><rect x="9" y="13" width="3" height="3" fill="url(#cc)"/><rect x="13" y="13" width="3" height="3" fill="url(#cc)"/><path d="M0.5 4.5V0.5H16.5V4.5M4.5 0V4M8.5 0V4M12.5 0V4" fill="none" stroke="#c09020" stroke-width="1"/></g><g transform="translate(412,654)"><rect x="0" y="0" width="17" height="17" fill="#8494bc"/><rect x="1" y="1" width="3" height="3" fill="url(#yh)"/><rect x="5" y="1" width="3" height="3" fill="url(#cc)"/><rect x="9" y="1" width="3" height="3" fill="url(#cc)"/><rect x="13" y="1" width="3" height="3" fill="url(#cc)"/><rect x="1" y="5" width="3" height="3" fill="url(#yh)"/><rect x="5" y="5" width="3" height="3" fill="url(#cc)"/><rect x="9" y="5" width="3" height="3" fill="url(#cc)"/><rect x="13" y="5" width="3" height="3" fill="url(#cc)"/><rect x="1" y="9" width="3" height="3" fill="url(#yh)"/><rect x="5" y="9" width="3" height="3" fill="url(#cc)"/><rect x="9" y="9" width="3" height="3" fill="url(#cc)"/><rect x="13" y="9" width="3" height="3" fill="url(#cc)"/><rect x="1" y="13" width="3" height="3" fill="url(#yh)"/><rect x="5" y="13" width="3" height="3" fill="url(#cc)"/><rect x="9" y="13" width="3" height="3" fill="url(#cc)"/><rect x="13" y="13" width="3" height="3" fill="url(#cc)"/><path d="M4.5 0.5H0.5V16.5H4.5M0 4.5H4M0 8.5H4M0 12.5H4" fill="none" stroke="#c09020" stroke-width="1"/></g><rect x="436" y="655" width="1" height="17" fill="#8c8c8c"/><rect x="437" y="655" width="1" height="17" fill="#fff"/><g transform="translate(445,656)"><g stroke="#fff"><path d="M2.5 0.5V15.5M0.5 13.5H16M0.8 2.6L2.5 0.4L4.2 2.6M14 11.8L16.2 13.5L14 15.2" fill="none" stroke-width="1"/><path d="M5.5 13V7M8.5 13V5.5M11.5 13V3.5M4.5 7.5L12.5 2.5" fill="none" stroke-width="1.2"/></g></g><g transform="translate(444,655)"><g stroke="#828282"><path d="M2.5 0.5V15.5M0.5 13.5H16M0.8 2.6L2.5 0.4L4.2 2.6M14 11.8L16.2 13.5L14 15.2" fill="none" stroke-width="1"/><path d="M5.5 13V7M8.5 13V5.5M11.5 13V3.5M4.5 7.5L12.5 2.5" fill="none" stroke-width="1.2"/></g></g><rect x="467" y="655" width="1" height="17" fill="#8c8c8c"/><rect x="468" y="655" width="1" height="17" fill="#fff"/><rect x="471" y="652" width="23" height="22" fill="url(#chk)"/><path d="M471.5 674V652.5H494" stroke="#707070" fill="none"/><path d="M472 673.5H493.5V653" stroke="#fff" fill="none"/><g transform="translate(475.5,655)"><rect x="0.5" y="0.5" width="15" height="15" fill="url(#pr)" stroke="#3858a8" stroke-width="1"/><rect x="2.5" y="2.5" width="3" height="3" fill="#e83848" stroke="#a01828" stroke-width="0.6"/><rect x="2.5" y="7" width="3" height="3" fill="#5078e0" stroke="#2848a0" stroke-width="0.6"/><rect x="2.5" y="11.6" width="3.4" height="1.8" fill="#202020"/><path d="M7.5 4H13.5M7.5 8.5H13.5M7.5 12.5H13.5" stroke="#3858a8" stroke-width="1"/></g><rect x="496" y="652" width="23" height="22" fill="url(#chk)"/><path d="M496.5 674V652.5H519" stroke="#707070" fill="none"/><path d="M497 673.5H518.5V653" stroke="#fff" fill="none"/><g transform="translate(499.5,655)"><path d="M2.5 0.5V15.5M0.5 13.5H16.5M0.6 3L2.5 0.4L4.4 3M14 11.6L16.6 13.5L14 15.4" fill="#000" stroke="#000" stroke-width="1"/><path d="M5.5 2.5V13M8.5 2.5V13M11.5 2.5V13M14.5 2.5V13" stroke="#3858a8" stroke-width="1"/><path d="M2.5 2.5H14.5" stroke="#3050a0" stroke-width="0.8"/><path d="M0.5 5.5H2M0.5 8.5H2M0.5 11H2" stroke="#000" stroke-width="0.8"/></g><rect x="521" y="652" width="23" height="22" fill="url(#chk)"/><path d="M521.5 674V652.5H544" stroke="#707070" fill="none"/><path d="M522 673.5H543.5V653" stroke="#fff" fill="none"/><g transform="translate(524.5,655)"><path d="M2.5 0.5V15.5M0.5 13.5H16.5M0.6 3L2.5 0.4L4.4 3M14 11.6L16.6 13.5L14 15.4" fill="#000" stroke="#000" stroke-width="1"/><path d="M3 2.5H14.5M3 5.5H14.5M3 8.5H14.5M3 11.5H14.5" stroke="#3858a8" stroke-width="1"/><path d="M14.5 2.5V13" stroke="#3050a0" stroke-width="0.8"/><path d="M5.5 14V15.5M8.5 14V15.5M11.5 14V15.5" stroke="#000" stroke-width="0.8"/></g><g transform="translate(602,683)"><g stroke="#fff"><path d="M1 1.5V8.5H8L5.6 6.3Q9 3.6 13 4.8Q15.6 5.8 16.4 8H17.5Q17.5 3.4 12.5 1.4Q7 0 3.2 3.6z" fill="none" stroke-width="1" stroke-linejoin="round"/><g transform="rotate(180 9.25 9.4)"><path d="M1 1.5V8.5H8L5.6 6.3Q9 3.6 13 4.8Q15.6 5.8 16.4 8H17.5Q17.5 3.4 12.5 1.4Q7 0 3.2 3.6z" fill="none" stroke-width="1" stroke-linejoin="round"/></g></g></g><g transform="translate(601,682)"><g stroke="#828282"><path d="M1 1.5V8.5H8L5.6 6.3Q9 3.6 13 4.8Q15.6 5.8 16.4 8H17.5Q17.5 3.4 12.5 1.4Q7 0 3.2 3.6z" fill="none" stroke-width="1" stroke-linejoin="round"/><g transform="rotate(180 9.25 9.4)"><path d="M1 1.5V8.5H8L5.6 6.3Q9 3.6 13 4.8Q15.6 5.8 16.4 8H17.5Q17.5 3.4 12.5 1.4Q7 0 3.2 3.6z" fill="none" stroke-width="1" stroke-linejoin="round"/></g></g></g></svg>
</div></body></html>
